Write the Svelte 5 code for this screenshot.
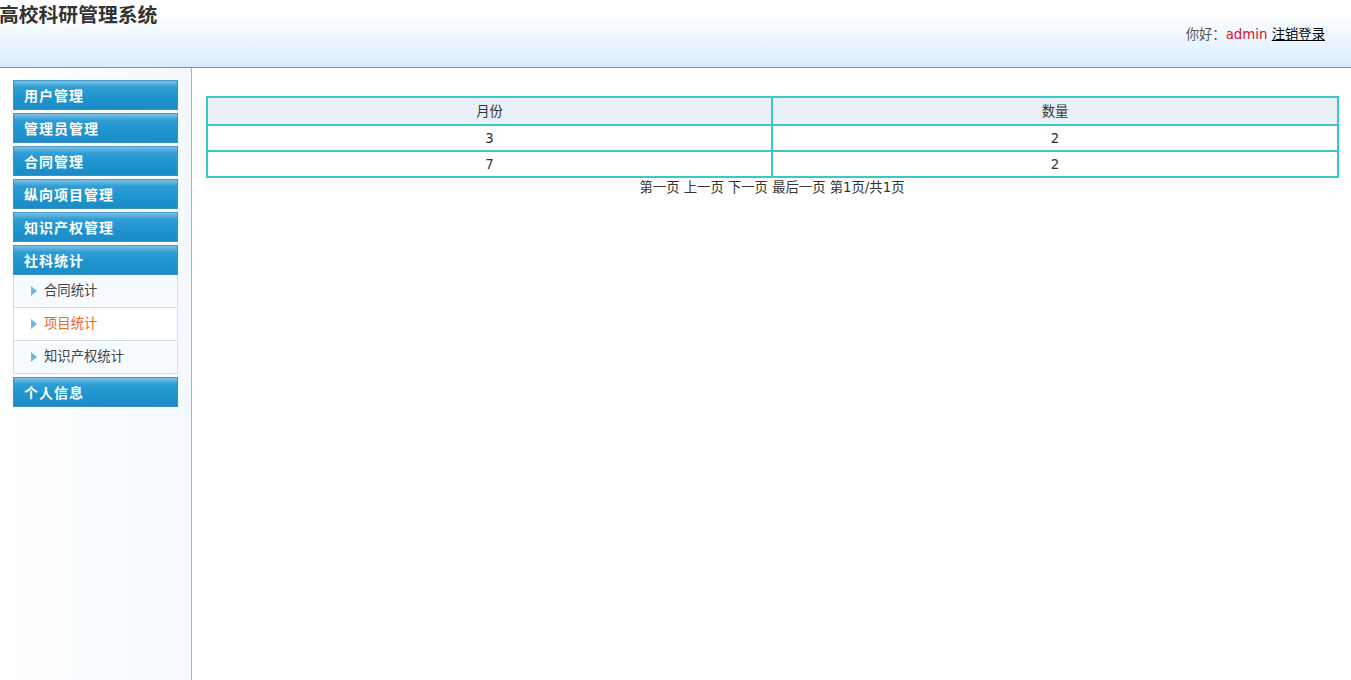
<script>
  const sections = ['用户管理', '管理员管理', '合同管理', '纵向项目管理', '知识产权管理'];
  const subItems = [
    { label: '合同统计', active: false },
    { label: '项目统计', active: true },
    { label: '知识产权统计', active: false }
  ];
  const rows = [
    { month: 3, count: 2 },
    { month: 7, count: 2 }
  ];
</script>

<div class="page">
  <header class="top">
    <h1>高校科研管理系统</h1>
    <div class="user">你好：<span class="name">admin</span> <a href="#logout">注销登录</a></div>
  </header>
  <div class="body">
    <aside class="side">
      {#each sections as s}
        <div class="head">{s}</div>
      {/each}
      <div class="head">社科统计</div>
      <ul class="subs">
        {#each subItems as it}
          <li class:active={it.active}>
            <svg class="arrow" width="6" height="10" viewBox="0 0 6 10"><path d="M0 0 L6 5 L0 10 Z" fill="#72b9da" /></svg>
            <span>{it.label}</span>
          </li>
        {/each}
      </ul>
      <div class="head">个人信息</div>
    </aside>
    <main class="main">
      <table>
        <thead>
          <tr><th class="first">月份</th><th>数量</th></tr>
        </thead>
        <tbody>
          {#each rows as r}
            <tr><td>{r.month}</td><td>{r.count}</td></tr>
          {/each}
        </tbody>
      </table>
      <div class="pager">第一页 上一页 下一页 最后一页 第1页/共1页</div>
    </main>
  </div>
</div>

<style>
  :global(body) {
    margin: 0;
    background: #fff;
    font-family: "DejaVu Sans", "Noto Sans CJK SC", sans-serif;
    font-size: 12px;
    color: #333;
  }
  .page {
    height: 680px;
    display: flex;
    flex-direction: column;
    overflow: hidden;
  }
  .top {
    height: 68px;
    box-sizing: border-box;
    flex: none;
    display: flex;
    justify-content: space-between;
    align-items: flex-start;
    background: linear-gradient(to bottom, #ffffff 0%, #ffffff 20%, #d9ecfe 100%);
    border-bottom: 1px solid #4b9ad6;
  }
  h1 {
    margin: 0 0 0 -1px;
    font-size: 19.8px;
    line-height: 28px;
    font-weight: 700;
    font-family: "Noto Sans CJK SC", sans-serif;
    color: #333;
  }
  .user {
    margin: 26px 26px 0 0;
    line-height: 18px;
    font-size: 13.33px;
    color: #555;
  }
  .name { color: #d8102a; }
  .user a { color: #000; text-decoration: underline; }
  .body {
    flex: 1;
    display: flex;
    min-height: 0;
  }
  .side {
    width: 165px;
    flex: none;
    padding: 12px 13px 0 13px;
    background: linear-gradient(to right, #ffffff, #f3f9fe);
    border-right: 1px solid #86c0e0;
  }
  .head {
    height: 30px;
    margin-bottom: 3px;
    padding-left: 10px;
    line-height: 28px;
    box-sizing: border-box;
    border: 1px solid #3f8fc0;
    border-top-color: #4a9bcb;
    background: linear-gradient(to bottom, #7cc0e4 0%, #2f9ed5 22%, #2095cf 55%, #1b8cc7 100%);
    color: #fff;
    font-weight: 700;
    font-size: 14px;
    letter-spacing: 1px;
    font-family: "Noto Sans CJK SC", sans-serif;
  }
  .subs {
    list-style: none;
    height: 99px;
    box-sizing: border-box;
    margin: -3px 0 3px;
    padding: 0;
    border: 1px solid #cfe0ec;
    border-top: none;
    background: #f6fbff;
  }
  .subs li {
    height: 33px;
    box-sizing: border-box;
    display: flex;
    align-items: center;
    padding-left: 17px;
    gap: 8px;
    font-size: 13.33px;
    color: #444;
    font-family: "Noto Sans CJK SC", sans-serif;
    border-bottom: 1px solid #cfdfea;
  }
  .subs li span { margin-top: -4px; margin-left: -1px; }
  .subs li:last-child { border-bottom: none; }
  .subs li.active { background: #fff; color: #e8692c; }
  .arrow { flex: none; margin-top: -1px; }
  .main {
    flex: 1;
    min-width: 0;
    padding: 28px 12px 0 14px;
  }
  table {
    width: 100%;
    border-collapse: collapse;
    table-layout: fixed;
    border: 2px solid #3cc8c8;
  }
  th, td {
    border: 2px solid #3cc8c8;
    text-align: center;
    font-weight: 400;
    font-size: 13.33px;
    color: #333;
    padding: 0;
  }
  th {
    height: 24px;
    padding-bottom: 2px;
    background: #e9f0f8;
  }
  th.first { width: 563px; }
  td { height: 24px; }
  .pager {
    padding-top: 1px;
    text-align: center;
    font-size: 13.33px;
    line-height: 18px;
    color: #333;
    padding-right: 1px;
  }
</style>
